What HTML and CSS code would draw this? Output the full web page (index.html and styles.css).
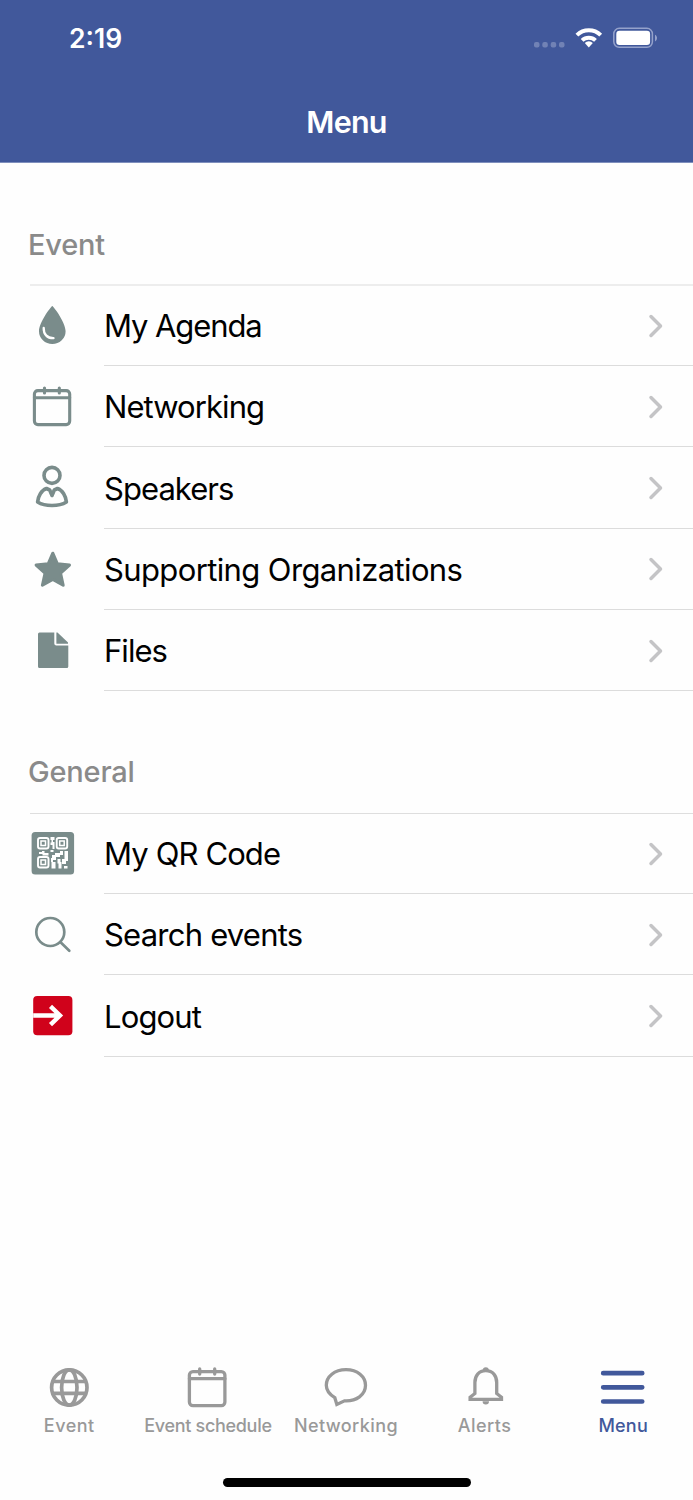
FILE: index.html
```html
<!DOCTYPE html>
<html lang="en">
<head>
<meta charset="utf-8">
<title>Menu</title>
<link rel="stylesheet" href="styles.css">
</head>
<body>
<div class="app">
  <header class="header">
    <div class="status">
      <span class="time">2:19</span>
      <svg class="status-icons" width="128" height="28" viewBox="530 24 128 28">
        <g fill="#7182b5"><rect x="534" y="42" width="5.5" height="5.5" rx="2"/><rect x="542.3" y="42" width="5.5" height="5.5" rx="2"/><rect x="550.7" y="42" width="5.5" height="5.5" rx="2"/><rect x="559" y="42" width="5.5" height="5.5" rx="2"/></g>
        <g fill="none" stroke="#fff" stroke-width="4"><path d="M576.9 35.1a17 17 0 0 1 23.8 0"/><path d="M582.1 40.4a9.8 9.8 0 0 1 13.4 0"/></g>
        <path d="M584.8 42.9a6 6 0 0 1 8 0L588.8 47.5z" fill="#fff"/>
        <rect x="613.8" y="28.3" width="38.6" height="19" rx="5.5" fill="none" stroke="#95a2cb" stroke-width="1.5"/>
        <rect x="616.3" y="30.8" width="33.8" height="14.2" rx="3.2" fill="#fff"/>
        <path d="M655 34.7c2.7 1.2 2.7 5.5 0 6.7z" fill="#95a2cb"/>
      </svg>
    </div>
    <h1 class="title">Menu</h1>
  </header>
  <main class="content">
    <section>
      <h2 class="heading heading-event"><span>Event</span></h2>
      <ul class="list">
        <li class="row">
          <svg class="icon" viewBox="0 0 104 80"><path d="M52.3 20C54 21 65.6 36.5 65.6 45.2A13.3 12.9 0 0 1 39 45.2C39 36.5 50.6 21 52.3 20Z" fill="#7a8c8b"/><path d="M43.7 42C43.5 48 47 52.3 53.5 52.2" fill="none" stroke="#fff" stroke-width="2.3" stroke-linecap="round"/></svg>
          <div class="cell"><span class="label l-agenda">My Agenda</span><svg class="chevron" viewBox="0 0 16 26"><path d="M3 3.5 12.5 13 3 22.5"/></svg></div>
        </li>
        <li class="row">
          <svg class="icon line" viewBox="0 0 104 80"><rect x="34.4" y="24.6" width="35.3" height="34" rx="3.5"/><path d="M34.4 31.7H69.7M44.5 22v5M59.3 22v5"/></svg>
          <div class="cell"><span class="label l-networking">Networking</span><svg class="chevron" viewBox="0 0 16 26"><path d="M3 3.5 12.5 13 3 22.5"/></svg></div>
        </li>
        <li class="row">
          <svg class="icon line person" viewBox="0 0 104 80"><circle cx="52" cy="28.4" r="8"/><path d="M46.5 41.5C41.5 43 38 49.5 37.6 55C45 59.7 59 59.7 66.4 55C66 49.5 62.5 43 57.5 41.5L54.3 43 52 48.5 49.7 43Z"/></svg>
          <div class="cell"><span class="label l-speakers">Speakers</span><svg class="chevron" viewBox="0 0 16 26"><path d="M3 3.5 12.5 13 3 22.5"/></svg></div>
        </li>
        <li class="row">
          <svg class="icon" viewBox="0 0 104 80"><path d="M52.8 24.2 57.4 34.8 69.5 36.1 60.6 44.2 63.2 56.3 52.8 50.4 42.4 56.3 45 44.2 36.1 36.1 48.2 34.8Z" fill="#7a8c8b" stroke="#7a8c8b" stroke-width="3" stroke-linejoin="round"/></svg>
          <div class="cell"><span class="label l-supporting">Supporting Organizations</span><svg class="chevron" viewBox="0 0 16 26"><path d="M3 3.5 12.5 13 3 22.5"/></svg></div>
        </li>
        <li class="row">
          <svg class="icon" viewBox="0 0 104 80"><g fill="#7a8c8b"><path d="M39.5 22.5H54.3V33.5Q54.3 35.5 56.3 35.5H68.3V56.5Q68.3 58 66.8 58H39.5Q38 58 38 56.5V24Q38 22.5 39.5 22.5Z"/><path d="M56.4 22.5H57.5L68 32.5V33.8H56.4Z"/></g></svg>
          <div class="cell"><span class="label l-files">Files</span><svg class="chevron" viewBox="0 0 16 26"><path d="M3 3.5 12.5 13 3 22.5"/></svg></div>
        </li>
      </ul>
    </section>
    <section>
      <h2 class="heading heading-general"><span>General</span></h2>
      <ul class="list">
        <li class="row">
          <svg class="icon" viewBox="0 0 104 80"><rect x="31.6" y="18" width="42.5" height="42.5" rx="3.5" fill="#7a8c8b"/><g fill="none" stroke="#fff" stroke-width="1.9"><rect x="38" y="24" width="10.5" height="10.5" rx="2"/><rect x="56.7" y="24" width="10.5" height="10.5" rx="2"/><rect x="38" y="43" width="10.5" height="10.5" rx="2"/></g><g fill="none" stroke="#fff" stroke-width="1.5"><rect x="41" y="27" width="4.5" height="4.5"/><rect x="59.7" y="27" width="4.5" height="4.5"/><rect x="41" y="46" width="4.5" height="4.5"/></g><path fill="#fff" d="M50.5 23h4v3h-1.500v2h1.500v7h-2v-4h-2v-2.500h1v-2.500h-1zM39 38h3v-1h2.500v2h4v2.500h-6v-1.500h-3.500zM50.500 36h3v2h-3zM52 41h3v-2h5v-2h3v4h-3v2h-4v3h-3v2h-2v-4h1zM64.500 37h3.500v10h-2v3h-4v-5h2.500zM51.500 48h4v6.500h-4zM57.500 45h3v3h1v6.500h-3v-5h-1zM64 52h3.500v2.500h-3.500z"/></svg>
          <div class="cell"><span class="label l-qr">My QR Code</span><svg class="chevron" viewBox="0 0 16 26"><path d="M3 3.5 12.5 13 3 22.5"/></svg></div>
        </li>
        <li class="row">
          <svg class="icon line search" viewBox="0 0 104 80"><circle cx="50.3" cy="38" r="14"/><path d="M60.3 48 69.3 56.7"/></svg>
          <div class="cell"><span class="label l-search">Search events</span><svg class="chevron" viewBox="0 0 16 26"><path d="M3 3.5 12.5 13 3 22.5"/></svg></div>
        </li>
        <li class="row">
          <svg class="icon" viewBox="0 0 104 80"><rect x="33.2" y="21" width="39.2" height="39.2" rx="4" fill="#d0021b"/><path d="M33.2 40.5H59.5M50.5 31.3 60 40.5 50.5 49.7" fill="none" stroke="#fff" stroke-width="4.4"/></svg>
          <div class="cell"><span class="label l-logout">Logout</span><svg class="chevron" viewBox="0 0 16 26"><path d="M3 3.5 12.5 13 3 22.5"/></svg></div>
        </li>
      </ul>
    </section>
  </main>
  <nav class="tabs">
    <a class="tab t-event"><svg viewBox="0 0 48 44"><g stroke-width="3.7"><circle cx="24.3" cy="22.5" r="17.7"/><ellipse cx="24.3" cy="22.5" rx="7.7" ry="17.7"/><path d="M8.3 16.5H40.3M8.3 28.3H40.3"/></g></svg><span>Event</span></a>
    <a class="tab t-schedule"><svg viewBox="0 0 48 44"><rect x="5.4" y="6.6" width="35.5" height="34" rx="3.5"/><path d="M5.4 13.7H40.9M15.7 4v5M30.7 4v5"/></svg><span>Event schedule</span></a>
    <a class="tab t-networking"><svg viewBox="0 0 48 44"><path stroke-linejoin="miter" d="M14.8 39.4 12.8 32.7C7.6 29.5 4.3 25 4.3 20.3C4.3 11.7 12.5 4.7 24 4.7S43.5 11.7 43.5 20.3C43.5 29.8 34.5 36.4 22.5 35.8Z"/></svg><span>Networking</span></a>
    <a class="tab t-alerts"><svg viewBox="0 0 48 44"><path stroke-linejoin="miter" d="M24.8 5.7C17.7 5.7 13.9 11 13.9 17.5V28.5L9.1 32.3V34.3H40.5V32.3L35.7 28.5V17.5C35.7 11 31.9 5.7 24.8 5.7Z"/><path d="M21.8 5.2a3 3 0 0 1 6 0zM21.6 36.3h6.4a3.2 3.2 0 0 1-6.4 0z" fill="#999" stroke="none"/></svg><span>Alerts</span></a>
    <a class="tab t-menu"><svg viewBox="0 0 48 44"><path d="M3.2 8.2H42.200M3.200 22.300H42.200M3.200 36.500H42.200" stroke-width="4.700"/></svg><span>Menu</span></a>
  </nav>
  <div class="home"></div>
</div>
</body>
</html>
```
FILE: styles.css
```css
* { box-sizing: border-box; }
body { margin: 0; background: #fefefe; font-family: Inter, sans-serif; }
.app { width: 693px; height: 1500px; display: flex; flex-direction: column; }
.header { height: 163px; background: #41589b; border-bottom: 1px solid #7f8fbd; color: #fff; }
.status { height: 76px; display: flex; justify-content: space-between; align-items: center; padding: 0 35px 0 69px; }
.time { font-size: 26.5px; font-weight: 600; }
.title { margin: 0; height: 92px; font-size: 30.5px; line-height: 91px; font-weight: 600; letter-spacing: -0.8px; text-align: center; }
.content { flex: 1; }
.heading { margin: 0 0 0 30px; height: 123px; display: flex; align-items: flex-end; padding-bottom: 21.5px; border-bottom: 2px solid #ededed; color: #8a8a8a; font-size: 29px; line-height: 36px; font-weight: 480; letter-spacing: -0.2px; }
.heading span { margin-left: -2px; }
.heading-general { padding-bottom: 23px; border-bottom: 1px solid #dedede; }
.list { list-style: none; margin: 0; padding: 0; }
.row { display: flex; height: 81.25px; }
.row:first-child { height: 80px; }
.icon { width: 104px; height: 80px; flex: none; }
.line { fill: none; stroke: #7a8c8b; stroke-width: 3.1; stroke-linecap: round; stroke-linejoin: round; }
.person { stroke-width: 3.6; }
.search { stroke-width: 2.7; }
.cell { flex: 1; display: flex; justify-content: space-between; align-items: center; border-bottom: 1px solid #dcdcdc; padding-right: 29px; }
.row:not(:first-child) .cell { padding-top: 1.5px; }
.label { margin-top: 1px; font-size: 31px; line-height: 40px; color: #000; white-space: nowrap; }
.l-agenda { letter-spacing: -1.1px; }
.l-networking { letter-spacing: -0.93px; }
.l-speakers { letter-spacing: -0.95px; }
.l-supporting { letter-spacing: -0.62px; }
.l-files { letter-spacing: -0.95px; }
.l-qr { letter-spacing: -0.88px; }
.l-search { letter-spacing: -0.78px; }
.l-logout { letter-spacing: -0.85px; }
.chevron { width: 16px; height: 26px; fill: none; stroke: #c4c4c6; stroke-width: 3.5; stroke-linecap: round; stroke-linejoin: round; }
.tabs { display: grid; grid-template-columns: repeat(5, 1fr); height: 113px; color: #999; }
.tab { display: flex; flex-direction: column; align-items: center; font-size: 18px; line-height: 24px; font-weight: 500; white-space: nowrap; }
.tab svg { width: 48px; height: 44px; margin-bottom: 5px; fill: none; stroke: currentColor; stroke-width: 3.3; stroke-linecap: round; stroke-linejoin: round; }
.t-event, .t-alerts { letter-spacing: 0.5px; }
.t-schedule { letter-spacing: -0.3px; }
.t-networking { letter-spacing: 0.4px; }
.t-networking span, .t-alerts span, .t-menu span { margin-left: -1px; }
.t-menu { color: #41589b; letter-spacing: 0.2px; }
.home { width: 248px; height: 8.5px; margin: 0 auto 13.5px; border-radius: 5px; background: #000; }
```
